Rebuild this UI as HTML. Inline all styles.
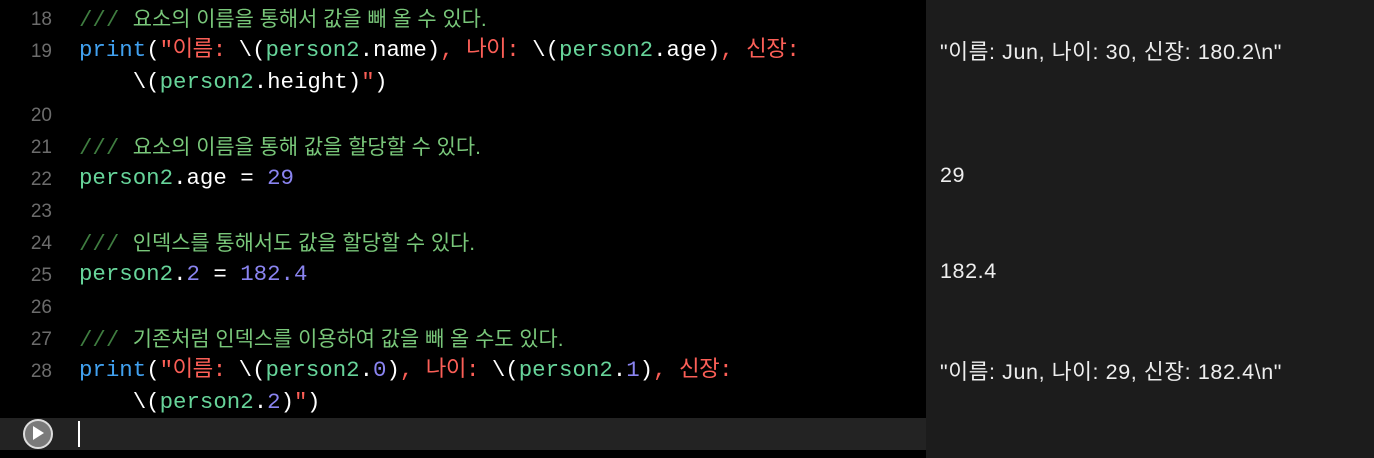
<!DOCTYPE html>
<html><head><meta charset="utf-8"><style>
body{margin:0;width:1374px;height:458px;background:#000;overflow:hidden;position:relative;font-family:"Liberation Mono","Noto Sans CJK KR",monospace}
.ln{position:absolute;left:0;width:52px;text-align:right;color:#6c6c6c;font-family:"Liberation Sans",sans-serif;font-size:19px}
.c{position:absolute;left:79px;font-size:22.4px;color:#fff;white-space:pre;line-height:32px}
.c .s{letter-spacing:-0.5px}
.cm{position:absolute;left:79px;font-family:"Liberation Sans","Noto Sans CJK KR",sans-serif;font-size:20.9px;color:#79c77a;white-space:pre}
.sl{font-family:"Liberation Mono",monospace;font-size:22.4px;color:#3f7d40}
.k{color:#41a1f0}.s{color:#fc5f57}.v{color:#67d49a}.n{color:#8a84f0}
.r{position:absolute;left:926px;top:0;width:448px;height:458px;background:#1c1c1c}
.o{position:absolute;left:940px;font-family:"Liberation Sans","Noto Sans CJK KR",sans-serif;font-size:21.5px;letter-spacing:0.6px;color:#eee;white-space:pre}
</style></head><body>
<div class="ln" style="top:9px">18</div><div class="cm" style="top:3px"><span class="sl">/// </span>요소의 이름을 통해서 값을 빼 올 수 있다.</div>
<div class="ln" style="top:41px">19</div><div class="c" style="top:34px"><span class="k">print</span>(<span class="s">"이름: </span>\(<span class="v">person2</span>.name)<span class="s">, 나이: </span>\(<span class="v">person2</span>.age)<span class="s">, 신장:</span></div>
<div class="c" style="top:66px">    \(<span class="v">person2</span>.height)<span class="s">"</span>)</div>
<div class="ln" style="top:105px">20</div>
<div class="ln" style="top:137px">21</div><div class="cm" style="top:131px"><span class="sl">/// </span>요소의 이름을 통해 값을 할당할 수 있다.</div>
<div class="ln" style="top:169px">22</div><div class="c" style="top:162px"><span class="v">person2</span>.age = <span class="n">29</span></div>
<div class="ln" style="top:201px">23</div>
<div class="ln" style="top:233px">24</div><div class="cm" style="top:227px"><span class="sl">/// </span>인덱스를 통해서도 값을 할당할 수 있다.</div>
<div class="ln" style="top:265px">25</div><div class="c" style="top:258px"><span class="v">person2</span>.<span class="n">2</span> = <span class="n">182.4</span></div>
<div class="ln" style="top:297px">26</div>
<div class="ln" style="top:329px">27</div><div class="cm" style="top:323px"><span class="sl">/// </span>기존처럼 인덱스를 이용하여 값을 빼 올 수도 있다.</div>
<div class="ln" style="top:361px">28</div><div class="c" style="top:354px"><span class="k">print</span>(<span class="s">"이름: </span>\(<span class="v">person2</span>.<span class="n">0</span>)<span class="s">, 나이: </span>\(<span class="v">person2</span>.<span class="n">1</span>)<span class="s">, 신장:</span></div>
<div class="c" style="top:386px">    \(<span class="v">person2</span>.<span class="n">2</span>)<span class="s">"</span>)</div>
<div style="position:absolute;left:0;top:418px;width:926px;height:32px;background:#232323"></div>
<div style="position:absolute;left:23px;top:419px;width:26px;height:26px;border:2px solid #ddd;border-radius:50%;background:#7a7a7a"></div>
<div style="position:absolute;left:33px;top:426px;width:0;height:0;border-left:11px solid #fff;border-top:7px solid transparent;border-bottom:7px solid transparent"></div>
<div style="position:absolute;left:78px;top:421px;width:2px;height:26px;background:#fff"></div>
<div class="r"></div>
<div class="o" style="top:35px">"이름: Jun, 나이: 30, 신장: 180.2\n"</div>
<div class="o" style="top:163px">29</div>
<div class="o" style="top:259px">182.4</div>
<div class="o" style="top:355px">"이름: Jun, 나이: 29, 신장: 182.4\n"</div>
</body></html>
